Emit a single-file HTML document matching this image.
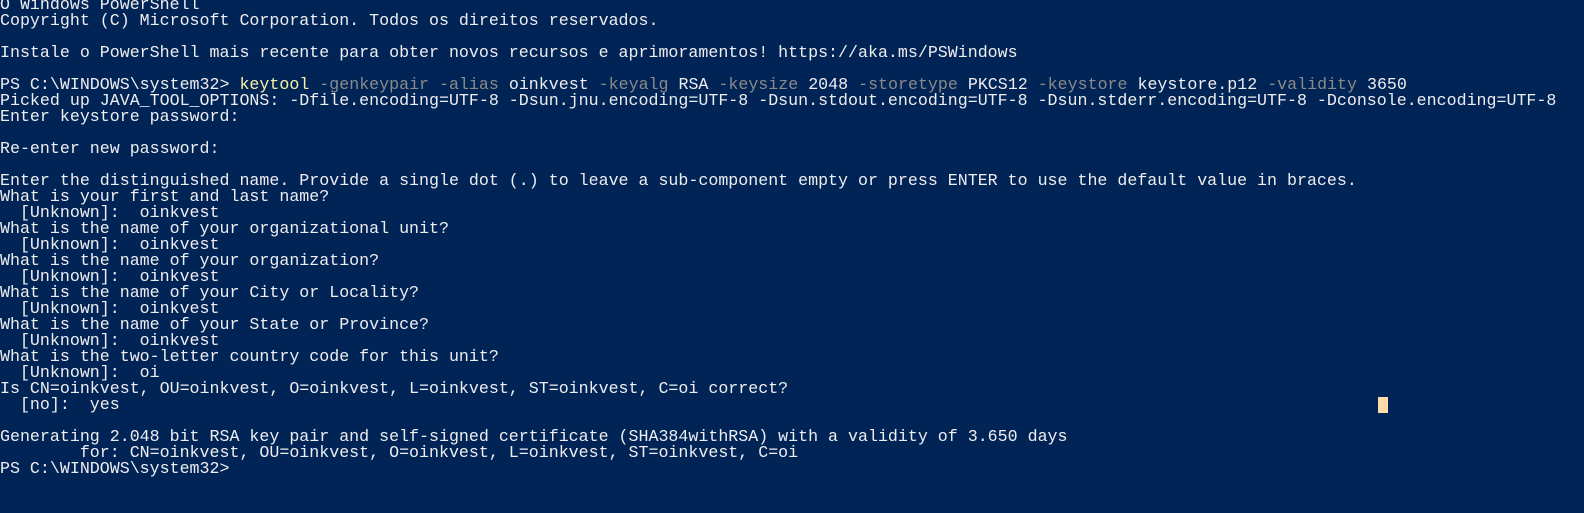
<!DOCTYPE html>
<html><head><meta charset="utf-8"><style>
html,body{margin:0;padding:0;background:#012456;width:1584px;height:513px;overflow:hidden}
pre{margin:0;position:absolute;left:0;top:-3px;font-family:"Liberation Mono",monospace;font-size:16.64px;line-height:16px;color:#eeedf0;white-space:pre}
.y{color:#f9f1a5}.g{color:#8a8a8a}
.cur{position:absolute;left:1378px;top:397px;width:10px;height:16px;background:#fedba9}
</style></head><body>
<pre>O Windows PowerShell
Copyright (C) Microsoft Corporation. Todos os direitos reservados.

Instale o PowerShell mais recente para obter novos recursos e aprimoramentos! https://aka.ms/PSWindows

PS C:\WINDOWS\system32&gt; <span class="y">keytool</span> <span class="g">-genkeypair -alias</span> oinkvest <span class="g">-keyalg</span> RSA <span class="g">-keysize</span> 2048 <span class="g">-storetype</span> PKCS12 <span class="g">-keystore</span> keystore.p12 <span class="g">-validity</span> 3650
Picked up JAVA_TOOL_OPTIONS: -Dfile.encoding=UTF-8 -Dsun.jnu.encoding=UTF-8 -Dsun.stdout.encoding=UTF-8 -Dsun.stderr.encoding=UTF-8 -Dconsole.encoding=UTF-8
Enter keystore password:

Re-enter new password:

Enter the distinguished name. Provide a single dot (.) to leave a sub-component empty or press ENTER to use the default value in braces.
What is your first and last name?
  [Unknown]:  oinkvest
What is the name of your organizational unit?
  [Unknown]:  oinkvest
What is the name of your organization?
  [Unknown]:  oinkvest
What is the name of your City or Locality?
  [Unknown]:  oinkvest
What is the name of your State or Province?
  [Unknown]:  oinkvest
What is the two-letter country code for this unit?
  [Unknown]:  oi
Is CN=oinkvest, OU=oinkvest, O=oinkvest, L=oinkvest, ST=oinkvest, C=oi correct?
  [no]:  yes

Generating 2.048 bit RSA key pair and self-signed certificate (SHA384withRSA) with a validity of 3.650 days
        for: CN=oinkvest, OU=oinkvest, O=oinkvest, L=oinkvest, ST=oinkvest, C=oi
PS C:\WINDOWS\system32&gt;</pre>
<div class="cur"></div>
</body></html>
